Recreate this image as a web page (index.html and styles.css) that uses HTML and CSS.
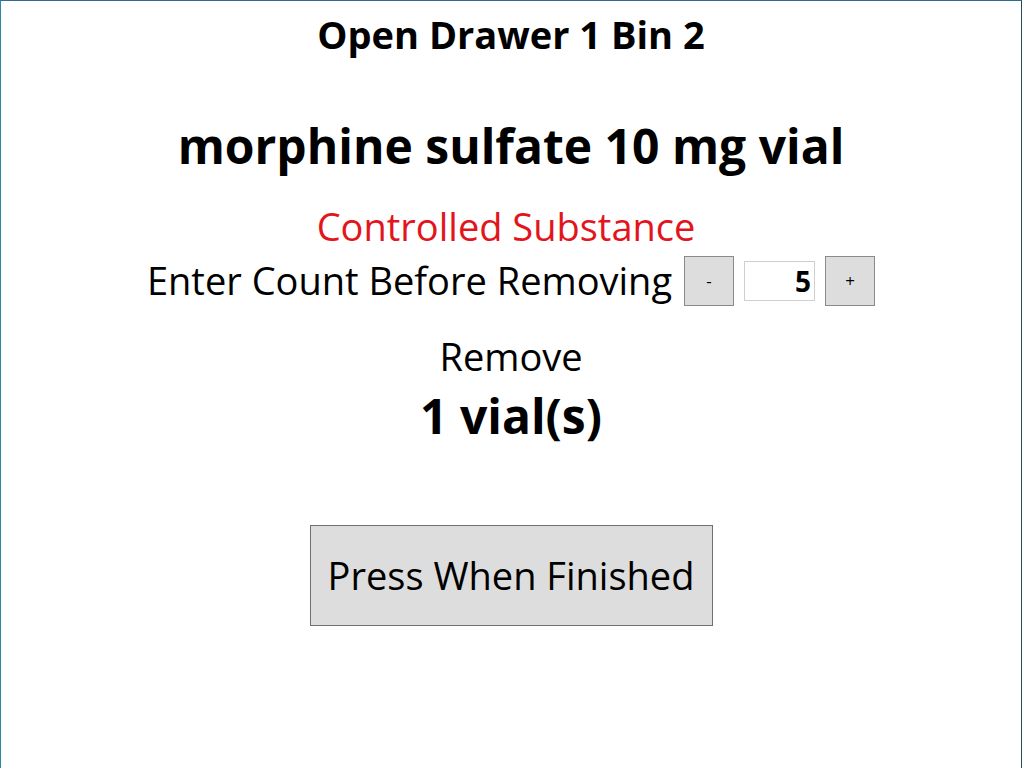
FILE: index.html
```html
<!DOCTYPE html>
<html lang="en">
<head>
  <meta charset="UTF-8">
  <meta name="viewport" content="width=device-width, initial-scale=1.0">
  <title>Open Drawer</title>
  <link rel="stylesheet" href="styles.css">
</head>
<body>

  <div class="window">

    <!-- Drawer location -->
    <h1 class="location">Open Drawer 1 Bin 2</h1>

    <!-- Item being removed -->
    <h2 class="item-name">morphine sulfate 10 mg vial</h2>

    <p class="controlled">Controlled Substance</p>

    <!-- Count before removing -->
    <div class="count-row">
      <span class="count-label">Enter Count Before Removing</span>
      <button class="step-btn">-</button>
      <input class="count-input" type="text" value="5">
      <button class="step-btn">+</button>
    </div>

    <p class="remove-label">Remove</p>
    <p class="remove-qty">1 vial(s)</p>

    <button class="finish-btn">Press When Finished</button>

  </div>

</body>
</html>
```

FILE: styles.css
```css
html, body {
  margin: 0;
  height: 100%;
}

body {
  font-family: "Open Sans", "Noto Sans", sans-serif;
  background-color: #ffffff;
  color: #000;
  line-height: 1.2;
}

.window {
  box-sizing: border-box;
  height: 100%;
  border-top: 1px solid #2f6d8c;
  border-left: 1px solid #2a86ab;
  border-right: 1px solid #1f4c5e;
  display: flex;
  flex-direction: column;
  align-items: center;
}

.location {
  font-size: 38px;
  font-weight: 700;
  margin: 11px 0 0;
  line-height: 1.2;
}

.item-name {
  font-size: 48px;
  font-weight: 700;
  margin: 59px 0 0;
  line-height: 1.2;
}

.controlled {
  font-size: 38px;
  color: #e3151c;
  margin: 30px 10px 0 0;
}

.count-row {
  display: flex;
  align-items: center;
  gap: 10px;
  margin-top: 6px;
}

.count-label {
  font-size: 38px;
  margin-right: 2px;
}

.step-btn {
  width: 50px;
  height: 50px;
  background: #dddddd;
  border: 1px solid #8a8a8a;
  font-family: "Open Sans", sans-serif;
  font-size: 17px;
  color: #000;
  padding: 0;
}

.count-input {
  box-sizing: border-box;
  width: 71px;
  height: 40px;
  border: 1px solid #cfcfcf;
  text-align: right;
  font-family: "Open Sans", sans-serif;
  font-size: 28px;
  font-weight: 700;
  padding: 0 3px 0 0;
  color: #000;
}

.remove-label {
  font-size: 38px;
  margin: 28px 0 0;
}

.remove-qty {
  font-size: 48px;
  font-weight: 700;
  margin: 8px 0 0;
}

.finish-btn {
  width: 403px;
  height: 101px;
  margin-top: 80px;
  background: #dddddd;
  border: 1px solid #707070;
  font-family: "Open Sans", sans-serif;
  font-size: 38px;
  color: #000;
  padding: 0;
}
```
